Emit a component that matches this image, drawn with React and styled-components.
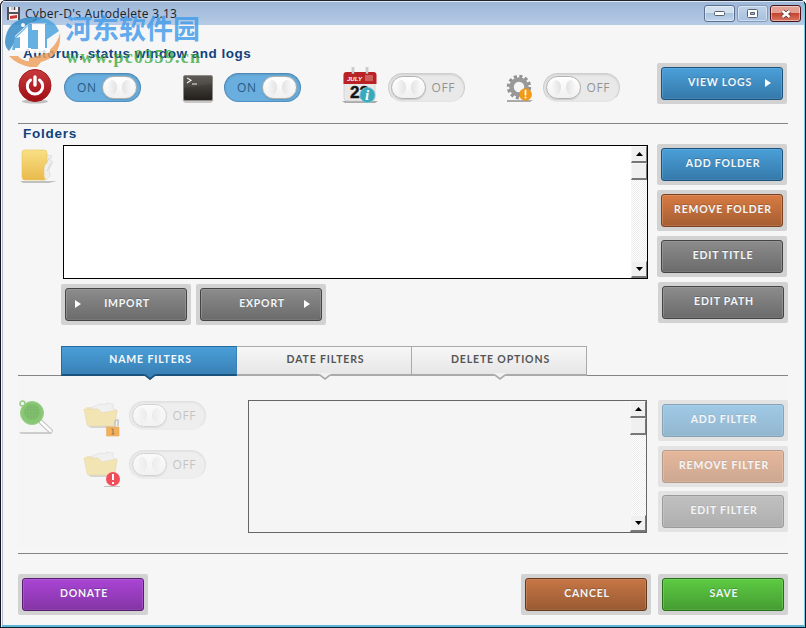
import React from 'react';
import styled, { createGlobalStyle, css } from 'styled-components';

const GlobalStyle = createGlobalStyle`
  * { box-sizing: border-box; }
  body { margin: 0; background: #fff; font-family: "Open Sans", "Noto Sans", sans-serif; }
  svg { display: block; }
`;

const tones = {
  blue: ['#4a9fd8', '#3579aa', '#1b527b', '#69ade0'],
  orange: ['#d87b43', '#a55e32', '#7c4120', '#df986c'],
  brown: ['#c67645', '#995a32', '#673719', '#cc8c65'],
  grey: ['#8c8c8c', '#6b6b6b', '#444', '#a0a0a0'],
  purple: ['#aa45d6', '#8434a5', '#571b70', '#b765d7'],
  green: ['#5dcb43', '#459c32', '#267018', '#7dd569'],
};

const Window = styled.div`
  position: relative;
  display: flex;
  flex-direction: column;
  width: 806px;
  height: 628px;
  padding: 1px 2px 3px 3px;
  overflow: hidden;
  border-radius: 6px 6px 0 0;
  background: #f6f6f6;
  box-shadow: inset 1px 0 #111722, inset -1px 0 #061923, inset 0 1px #20242c,
    inset 0 -1px #07202d, inset 2px 0 #f5f8fb, inset -2px 0 #73cbe2,
    inset 0 -3px #5eb5d8, inset 3px 0 #b8bdcc;
`;

const TitleBar = styled.header`
  display: flex;
  align-items: flex-start;
  height: 24px;
  padding: 5px 3px 0 4px;
  border-top: 1px solid #dce8f5;
  background: linear-gradient(#9db7d7, #b5cbe6);
`;

const Title = styled.h1`
  flex: 1;
  margin: -1px 0 0 5px;
  font: 400 12px/16px "Open Sans", sans-serif;
  letter-spacing: 0.3px;
  color: #17202a;
`;

const WindowButtons = styled.div`
  display: flex;
  gap: 2px;
  margin-top: -2px;
`;

const WindowButton = styled.button`
  display: grid;
  place-items: center;
  width: 31px;
  height: 17px;
  padding: 0;
  border: 1px solid ${(p) => (p.$close ? '#47161d' : p.$dim ? '#829bba' : '#59718f')};
  border-radius: 3px;
  background: ${(p) =>
    p.$close
      ? 'linear-gradient(#e5a094 0 45%, #c4402b 46%, #d77661)'
      : p.$dim
        ? 'linear-gradient(#bed1e8, #a8c1df)'
        : 'linear-gradient(#d1dfef 0 45%, #a9c0dc 46%, #bfd4ec)'};
  box-shadow: inset 0 0 0 1px #ffffff70;
`;

const Body = styled.main`
  flex: 1;
  display: flex;
  flex-direction: column;
  width: 785px;
  padding-left: 15px;
`;

const Heading = styled.h2`
  margin: 0 0 0 5px;
  font: 700 13.5px/16px "Liberation Sans", Arial, sans-serif;
  letter-spacing: ${(p) => p.$spacing};
  white-space: nowrap;
  color: #10427d;
`;

const StatusSection = styled.section`
  height: 98px;
  padding-top: 21px;
`;

const StatusRow = styled.div`
  display: grid;
  grid-template-columns: 160px 164px 155px 160px 130px;
  align-items: start;
  padding-top: 1px;
`;

const StatusItem = styled.div`
  display: flex;
  padding-top: 4px;
`;

const Track = styled.div`
  display: flex;
  flex-direction: ${(p) => (p.$on ? 'row-reverse' : 'row')};
  align-items: center;
  justify-content: space-between;
  width: 77px;
  height: 29px;
  margin-top: ${(p) => p.$top || 0}px;
  padding: ${(p) => (p.$on ? '0 3px 1px 12px' : '0 9px 1px 2px')};
  border: 1px solid ${(p) => (p.$on ? '#5089b5' : '#cfcfcf')};
  border-bottom-color: ${(p) => (p.$on ? '#4f91c4' : '#e5e5e5')};
  border-radius: 15px;
  background: ${(p) => (p.$on ? '#69aede' : '#e9e9e9')};
  color: ${(p) => (p.$on ? '#285b82' : '#939393')};
  box-shadow: inset 0 1px 2px #0000001c;
`;

const TrackLabel = styled.span`
  padding-top: 2px;
  font-size: 12px;
  line-height: 16px;
  letter-spacing: 0.6px;
`;

const Knob = styled.span`
  display: flex;
  align-items: center;
  justify-content: center;
  gap: 5px;
  width: 35px;
  height: 23px;
  border: 1px solid #b1b1b1;
  border-radius: 12px;
  background: linear-gradient(#fff, #f0f0f0);
  box-shadow: 0 1px 1px #0002;

  &::before,
  &::after {
    content: "";
    width: 10px;
    height: 15px;
    border-radius: 50%;
    background: linear-gradient(90deg, #f9f9f9, #e2e2e2);
  }
  &::after {
    transform: scaleX(-1);
  }
`;

const ButtonFrame = styled.div`
  width: 130px;
  height: 41px;
  padding: 4px;
  border-radius: 2px;
  background: #d2d2d2;
  margin-left: ${(p) => p.$shift || 0}px;
`;

const ButtonFace = styled.button`
  display: flex;
  align-items: center;
  justify-content: center;
  position: relative;
  width: 122px;
  height: 33px;
  padding: 0 ${(p) => p.$inset || 0}px 2px 2px;
  border: 1px solid ${(p) => tones[p.$tone][2]};
  border-radius: 3px;
  background: linear-gradient(${(p) => tones[p.$tone][0]}, ${(p) => tones[p.$tone][1]});
  box-shadow: inset 0 0 0 1px ${(p) => tones[p.$tone][3]}90, inset 0 -1px ${(p) => tones[p.$tone][2]};
  color: #f4f7fa;
  font: 700 10.5px/15px Lato, "Open Sans", sans-serif;
  letter-spacing: 0.8px;
  text-shadow: 0 -1px #0003;
  white-space: nowrap;
`;

const Arrow = styled.i`
  position: absolute;
  top: 11px;
  ${(p) => (p.$side === 'left' ? css`left: 9px;` : css`right: 11px;`)}
  border: solid transparent;
  border-width: 4px 0 4px 6px;
  border-left-color: #fff;
`;

const FolderSection = styled.section`
  height: 223px;
  padding-top: 2px;
  border-top: 1px solid #858585;
`;

const FolderGrid = styled.div`
  display: grid;
  grid-template-columns: 45px 585px 130px;
  margin-top: 2px;
`;

const FolderMain = styled.div`
  padding-top: 1px;
`;

const ListBox = styled.div`
  display: flex;
  justify-content: flex-end;
  width: ${(p) => p.$width}px;
  height: ${(p) => p.$height}px;
  border: 1px solid ${(p) => (p.$disabled ? '#666' : '#000')};
  background: ${(p) => (p.$disabled ? '#f5f5f5' : '#fff')};
`;

const ScrollTrack = styled.div`
  display: flex;
  flex-direction: column;
  width: 16px;
  background: repeating-conic-gradient(#ececec 0 25%, #fff 0 50%) 0 0 / 2px 2px;
`;

const ScrollButton = styled.div`
  display: grid;
  place-items: center;
  height: 17px;
  margin-top: ${(p) => (p.$bottom ? 'auto' : 0)};
  border: 1px solid #f7f7f7;
  border-right: 1px solid #777;
  border-bottom: 2px solid #777;
  background: #f0f0f0;
`;

const TransferButtons = styled.div`
  display: flex;
  gap: 5px;
  margin: 5px 0 0 -2px;
`;

const ButtonStack = styled.div`
  display: flex;
  flex-direction: column;
  gap: 5px;
  margin-left: ${(p) => p.$left || 0}px;

  ${(p) =>
    p.$tightEnd &&
    css`
      > :last-child {
        margin-top: -1px;
      }
    `}
`;

const TabBar = styled.nav`
  display: flex;
  height: 30px;
  padding-left: 43px;
  background: linear-gradient(#858585, #858585) 0 29px / 770px 1px no-repeat;
`;

const Tab = styled.button`
  position: relative;
  width: 175px;
  height: 30px;
  padding: 0 0 3px 3px;
  border: 1px solid #aaa;
  border-left-width: ${(p) => (p.$active ? 1 : 0)}px;
  border-bottom: 2px solid #aaa;
  background: linear-gradient(#f7f7f7, #e6e6e6);
  color: #555;
  font: 700 10.5px/15px Lato, "Open Sans", sans-serif;
  letter-spacing: 0.85px;

  ${(p) =>
    p.$active &&
    css`
      width: 176px;
      border-color: #286c9d;
      border-right-color: #3981b6;
      border-bottom-color: #1b527b;
      background: linear-gradient(#4a9fd8, #3981b6);
      color: #f3f8fc;
    `}
`;

const Pointer = styled.svg`
  position: absolute;
  left: 82px;
  top: 26px;
`;

const FilterSection = styled.section`
  display: flex;
  height: 178px;
  width: 770px;
  padding-top: 24px;
  border-bottom: 1px solid #858585;
  background: linear-gradient(#f5f5f5, #f5f5f5) 0 0 / 770px 172px no-repeat;
`;

const Faded = styled.div`
  opacity: ${(p) => p.$level || 0.5};
`;

const FilterOptions = styled.div`
  display: flex;
  flex-direction: column;
  gap: 9px;
  width: 165px;
  margin-left: 20px;
`;

const FilterOption = styled.div`
  display: flex;
  height: 40px;
`;

const Footer = styled.footer`
  display: flex;
  width: 770px;
  margin-top: 20px;
  gap: 7px;
`;

const FooterSpacer = styled.div`
  flex: 1;
`;

const Watermark = styled.div`
  position: absolute;
  left: 4px;
  top: 13px;
  display: flex;
  pointer-events: none;
`;

const WatermarkText = styled.div`
  display: flex;
  flex-direction: column;
  width: 145px;
  white-space: nowrap;
`;

const SiteName = styled.span`
  margin: 1px 0 0 1px;
  color: #459cea;
  font: 700 27px/32px "Liberation Sans", "Noto Sans CJK SC", sans-serif;
  opacity: 0.83;
`;

const SiteUrl = styled.span`
  margin: 1px 0 0 2px;
  color: #35a534;
  font: 700 18px/20px "Liberation Serif", serif;
  letter-spacing: 1.25px;
  opacity: 0.75;
`;

function Button({ tone, children, arrow, shift, inset }) {
  return (
    <ButtonFrame $shift={shift}>
      <ButtonFace $tone={tone} $inset={inset}>
        {children}
        {arrow && <Arrow $side={arrow} />}
      </ButtonFace>
    </ButtonFrame>
  );
}

function Toggle({ on, top }) {
  return (
    <Track $on={on} $top={top}>
      <Knob />
      <TrackLabel>{on ? 'ON' : 'OFF'}</TrackLabel>
    </Track>
  );
}

function ScrollBar() {
  return (
    <ScrollTrack>
      <ScrollButton><svg width="7" height="4"><path d="M0 4 3.5 0 7 4z" /></svg></ScrollButton>
      <ScrollButton />
      <ScrollButton $bottom><svg width="7" height="4"><path d="M0 0 3.5 4 7 0z" /></svg></ScrollButton>
    </ScrollTrack>
  );
}

function AppIcon() {
  return (
    <svg width="13" height="13" viewBox="0 0 13 13">
      <path d="M0 0h13v13H0z" fill="#535158" />
      <path d="M2 0h9v5H2zM2 7h9v6H2z" fill="#f7eeee" />
      <path d="M4 0h5v3H4z" fill="#cbc8ce" /><path d="M7 0h1v3H7z" fill="#444" />
      <path d="m3 9 7-1v3l-7 1z" fill="#c73632" />
    </svg>
  );
}

function PowerIcon() {
  return (
    <svg width="46" height="40" viewBox="0 0 46 40">
      <defs><linearGradient id="power" x2="0" y2="1"><stop stopColor="#c83b3d" /><stop offset="1" stopColor="#9f0d13" /></linearGradient></defs>
      <ellipse cx="17" cy="34.5" rx="13" ry="2" fill="#aaa" opacity=".7" />
      <circle cx="17" cy="18.5" r="16" fill="url(#power)" stroke="#a3191c" />
      <path d="M12.5 13a7.7 7.7 0 1 0 9 0" fill="none" stroke="#fff" strokeWidth="3" strokeLinecap="round" />
      <path d="M17 10v8" stroke="#fff" strokeWidth="3.4" strokeLinecap="round" />
    </svg>
  );
}

function TerminalIcon() {
  return (
    <svg width="46" height="40" viewBox="0 0 46 40">
      <defs><linearGradient id="terminal" x2="0" y2="1"><stop stopColor="#595550" /><stop offset="1" stopColor="#211e1b" /></linearGradient></defs>
      <path d="M4 33h32l-3 3H7z" fill="#aaa" opacity=".6" />
      <rect x="5.5" y="8.5" width="29" height="25" rx="1.5" fill="url(#terminal)" stroke="#8e8a86" />
      <path d="M6 21 34 17V9H6z" fill="#fff" opacity=".05" />
      <path d="m9 11 4 2.3L9 16M14 17h5" stroke="#eee" strokeWidth="1.2" fill="none" />
    </svg>
  );
}

function CalendarIcon() {
  return (
    <svg width="46" height="40" viewBox="0 0 46 40">
      <path d="M0 34h36l-3 2H3z" fill="#aaa" />
      <rect x="2" y="6" width="31" height="28" rx="3" fill="#e8e8e8" stroke="#ccc" strokeWidth=".7" />
      <path d="M1.5 17V8a3 3 0 0 1 3-3h27a3 3 0 0 1 3 3v9z" fill="#b92325" />
      <path d="M23 8h8v6h-8z" fill="#d77774" opacity=".7" />
      <path d="M11 0v7M25 0v7" stroke="#aaa" strokeWidth="2.5" />
      <path d="M11 0v6M25 0v6" stroke="#eee" strokeWidth="1" />
      <text x="5" y="14" fill="#fff" fontFamily="Liberation Sans" fontSize="6" fontStyle="italic" fontWeight="700">JULY</text>
      <text x="8" y="31" fill="#151515" stroke="#151515" strokeWidth=".5" fontFamily="Liberation Sans" fontSize="17" fontWeight="700">22</text>
      <circle cx="25.5" cy="28" r="7.6" fill="#39a9bd" stroke="#77cbd5" strokeWidth=".8" />
      <text x="22.9" y="33" fill="#fff" fontFamily="Liberation Serif" fontSize="15" fontStyle="italic" fontWeight="700">i</text>
    </svg>
  );
}

function GearIcon() {
  return (
    <svg width="46" height="40" viewBox="0 0 46 40">
      <path d="M10 33h26l-3 2H10z" fill="#aaa" />
      <circle cx="22" cy="20" r="10.5" fill="none" stroke="#929292" strokeWidth="3.4" strokeDasharray="3 2.5" />
      <circle cx="22" cy="20" r="7.5" fill="none" stroke="#999" strokeWidth="4.5" />
      <circle cx="28.5" cy="27.5" r="6" fill="#f49b16" stroke="#df8f21" strokeWidth=".6" />
      <path d="M28.5 23.5v4.3" stroke="#fff" strokeWidth="1.7" strokeLinecap="round" />
      <circle cx="28.5" cy="30.4" r="1" fill="#fff" />
    </svg>
  );
}

function FolderIcon() {
  return (
    <svg width="45" height="44" viewBox="0 0 45 44">
      <defs><linearGradient id="folder" x2="0" y2="1"><stop stopColor="#f9df85" /><stop offset="1" stopColor="#e9ba4c" /></linearGradient></defs>
      <path d="M2 37h37l-8 2H5z" fill="#aaa" opacity=".7" />
      <path d="m25 10 9 2-2 4 3 2-4 7 1 7-4 4h-6z" fill="#eee" stroke="#d9d9d9" strokeWidth=".7" />
      <path d="m31 14-3 6m5-1-4 8" stroke="#ccc" strokeWidth=".7" />
      <path d="M4 8q0-2 3-2h19q3 0 3 3v9q-3 3-3 6v9q3 3-1 3L7 36q-3 0-3-3z" fill="url(#folder)" stroke="#e9c65d" strokeWidth=".6" />
    </svg>
  );
}

function SieveIcon() {
  return (
    <svg width="45" height="40" viewBox="0 0 45 40">
      <defs><pattern id="mesh" width="3" height="3" patternUnits="userSpaceOnUse"><circle cx="1" cy="1" r=".6" fill="#388d28" /></pattern></defs>
      <path d="M1 32h30l3 2H3z" fill="#aaa" opacity=".7" />
      <path d="m23 22 9.5 9" stroke="#aaa" strokeWidth="4.5" strokeLinecap="round" />
      <path d="m23 22 9.5 9" stroke="#fff" strokeWidth="2.8" strokeLinecap="round" />
      <circle cx="4.5" cy="3.5" r="2.5" fill="none" stroke="#78ba61" strokeWidth="1.4" />
      <circle cx="14" cy="13" r="11.5" fill="#64b848" stroke="#7fc368" />
      <circle cx="14" cy="12" r="8" fill="#59ac40" /><circle cx="14" cy="12" r="7" fill="url(#mesh)" />
    </svg>
  );
}

function FilterFolder({ warning }) {
  return (
    <svg width="46" height="40" viewBox="0 0 46 40">
      <g opacity=".85">
        <path d="M5 26h29l-2 2H8z" fill="#999" opacity=".6" />
        <path d="M3 7h13l3 3h15l-2 13H6z" fill="#eddb9d" />
        <path d="m9 7 8-3 6 1V3l7 1v4l3 2-1 8H8z" fill="#eee" stroke="#ccc" strokeWidth=".6" />
        <path d="M1 9h14l4 4 15-3-2 14q0 2-2 2H6q-2 0-2-2z" fill="#f3da84" stroke="#ddc373" strokeWidth=".6" />
      </g>
      {warning ? (
        <g>
          <path d="M21 37h16v1H21z" fill="#aaa" />
          <circle cx="30" cy="30" r="7" fill="#f00015" />
          <path d="M30 25v6m0 2v2" stroke="#fff" strokeWidth="2" />
        </g>
      ) : (
        <g>
          <path d="M32 26v-4q0-2 2-2t1 3v3" fill="none" stroke="#aaa" strokeWidth="1.5" />
          <path d="M23.5 27H36v9H23.5z" fill="#f39010" stroke="#da8a18" strokeWidth=".6" />
          <path d="M30 29v5M28.5 29H30m-1.5 5h3" stroke="#684017" strokeWidth="1.1" />
        </g>
      )}
    </svg>
  );
}

function FilterTab({ active, children }) {
  return (
    <Tab $active={active}>
      {children}
      <Pointer width="12" height="8" viewBox="0 0 12 8">
        <path d="M0 0h12v2L6 7 0 2z" fill={active ? '#3981b6' : '#f2f2f2'} />
        <path d="M0 2h1l5 4 5-4h1" fill="none" stroke={active ? '#1b527b' : '#aaa'} strokeWidth="1.7" />
      </Pointer>
    </Tab>
  );
}

function SiteLogo() {
  return (
    <svg width="60" height="55" viewBox="0 0 60 55">
      <g opacity=".83">
        <path d="M1 29Q2 7 26 4q8-1 14 2L24 11 11 23v6l-6 9Q1 34 1 29z" fill="#348bc9" />
        <path d="M24 11 40 5q11 3 15 13L42 27V10H28z" fill="#4ba4df" />
        <path d="M25 11h18v26H8l3-13z" fill="#4ba4df" />
        <path d="M5 43h9q5 6 13 5v6Q13 52 5 43z" fill="#efa15e" />
        <path d="M56 20q2 24-19 29l-4 5h-8v-9q26-4 31-25z" fill="#efa15e" />
        <path d="m12 25 12-12v22h3v3H11v-3h5V24zM28 11h13v24h5v5H26v-4h8V17h-6z" fill="#fff" />
        <circle cx="19" cy="12" r="2" fill="#fff" />
      </g>
    </svg>
  );
}

export default function App() {
  return (
    <>
      <GlobalStyle />
      <Window>
        <TitleBar>
          <AppIcon />
          <Title>Cyber-D's Autodelete 3.13</Title>
          <WindowButtons>
            <WindowButton><svg width="11" height="5"><rect x=".5" y=".5" width="10" height="4" rx="1" fill="#fff" stroke="#59616e" /></svg></WindowButton>
            <WindowButton $dim><svg width="11" height="9"><rect x=".5" y=".5" width="10" height="8" rx="1" fill="#fff" stroke="#59616e" /><path d="M3.5 3.5h4v2h-4z" fill="#a5bdd9" stroke="#59616e" /></svg></WindowButton>
            <WindowButton $close><svg width="12" height="10"><path d="m2.5 2 7 6m0-6-7 6" stroke="#62353b" strokeWidth="4" /><path d="m2.5 2 7 6m0-6-7 6" stroke="#fff" strokeWidth="2.4" /></svg></WindowButton>
          </WindowButtons>
        </TitleBar>
        <Body>
          <StatusSection>
            <Heading $spacing="0.52px">Autorun, status window and logs</Heading>
            <StatusRow>
              <StatusItem><PowerIcon /><Toggle on top={6} /></StatusItem>
              <StatusItem><TerminalIcon /><Toggle on top={6} /></StatusItem>
              <StatusItem><CalendarIcon /><Toggle top={6} /></StatusItem>
              <StatusItem><GearIcon /><Toggle top={6} /></StatusItem>
              <Button tone="blue" arrow="right" inset={6}>VIEW LOGS</Button>
            </StatusRow>
          </StatusSection>
          <FolderSection>
            <Heading $spacing="0.75px">Folders</Heading>
            <FolderGrid>
              <FolderIcon />
              <FolderMain>
                <ListBox $width={585} $height={134}><ScrollBar /></ListBox>
                <TransferButtons>
                  <Button tone="grey" arrow="left">IMPORT</Button>
                  <Button tone="grey" arrow="right">EXPORT</Button>
                </TransferButtons>
              </FolderMain>
              <ButtonStack $left={9}>
                <Button tone="blue">ADD FOLDER</Button>
                <Button tone="orange">REMOVE FOLDER</Button>
                <Button tone="grey">EDIT TITLE</Button>
                <Button tone="grey" shift={1}>EDIT PATH</Button>
              </ButtonStack>
            </FolderGrid>
          </FolderSection>
          <TabBar>
            <FilterTab active>NAME FILTERS</FilterTab>
            <FilterTab>DATE FILTERS</FilterTab>
            <FilterTab>DELETE OPTIONS</FilterTab>
          </TabBar>
          <FilterSection>
            <Faded $level={0.75}><SieveIcon /></Faded>
            <FilterOptions>
              <FilterOption>
                <Faded $level={0.68}><FilterFolder /></Faded>
                <Faded><Toggle top={1} /></Faded>
              </FilterOption>
              <FilterOption>
                <Faded $level={0.68}><FilterFolder warning /></Faded>
                <Faded><Toggle top={1} /></Faded>
              </FilterOption>
            </FilterOptions>
            <ListBox $width={399} $height={133} $disabled><ScrollBar /></ListBox>
            <Faded>
              <ButtonStack $left={11} $tightEnd>
                <Button tone="blue">ADD FILTER</Button>
                <Button tone="orange">REMOVE FILTER</Button>
                <Button tone="grey">EDIT FILTER</Button>
              </ButtonStack>
            </Faded>
          </FilterSection>
          <Footer>
            <Button tone="purple">DONATE</Button>
            <FooterSpacer />
            <Button tone="brown">CANCEL</Button>
            <Button tone="green">SAVE</Button>
          </Footer>
        </Body>
        <Watermark>
          <SiteLogo />
          <WatermarkText>
            <SiteName>河东软件园</SiteName>
            <SiteUrl>www.pc0359.cn</SiteUrl>
          </WatermarkText>
        </Watermark>
      </Window>
    </>
  );
}
